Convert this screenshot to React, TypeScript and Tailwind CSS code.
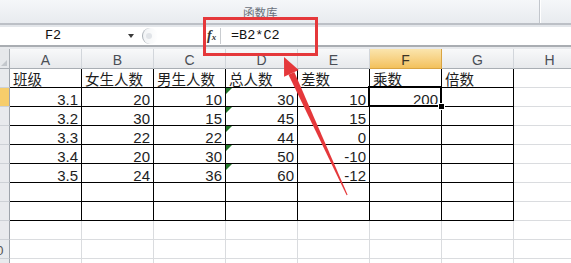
const COLS = ['A', 'B', 'C', 'D', 'E', 'F', 'G', 'H'];

const DATA: string[][] = [
  ['班级', '女生人数', '男生人数', '总人数', '差数', '乘数', '倍数'],
  ['3.1', '20', '10', '30', '10', '200', ''],
  ['3.2', '30', '15', '45', '15', '', ''],
  ['3.3', '22', '22', '44', '0', '', ''],
  ['3.4', '20', '30', '50', '-10', '', ''],
  ['3.5', '24', '36', '60', '-12', '', ''],
  ['', '', '', '', '', '', ''],
  ['', '', '', '', '', '', ''],
  [],
  [],
  [],
];

function Cell({ value, row, col }: { value: string; row: number; col: number }) {
  const boxed = row < 8 && col < 7;
  const isNum = /^-?\d/.test(value);
  const selected = row === 1 && col === 5;
  const flagged = col === 3 && row >= 1 && row <= 5;

  return (
    <div
      className={`relative h-[19px] border-b border-r ${boxed ? 'border-black' : 'border-[#dadcdf]'} ${
        isNum
          ? "pr-[3px] text-right font-['Liberation_Sans',sans-serif] text-[15px] leading-[23px]"
          : "pl-[3px] font-['Noto_Sans_CJK_SC',sans-serif] text-[14.5px] leading-[19px]"
      } whitespace-nowrap text-[#1e1e1e]`}
    >
      {value}
      {flagged && (
        <span className="absolute left-0 top-0 h-0 w-0 border-r-[6px] border-t-[6px] border-r-transparent border-t-[#22772a]" />
      )}
      {selected && (
        <>
          <span className="absolute -bottom-[1px] -left-[2px] -right-[1px] -top-[2px] z-10 border-2 border-black shadow-[inset_0_0_0_1px_#fff]" />
          <span className="absolute -bottom-[4px] -right-[4px] z-10 h-[7px] w-[7px] border border-white bg-black" />
        </>
      )}
    </div>
  );
}

export default function App() {
  return (
    <div className="relative h-[263px] w-[571px] overflow-hidden bg-white font-['Liberation_Sans',sans-serif]">
      {/* ribbon */}
      <div className="flex h-[23px] bg-gradient-to-b from-[#f5f7f9] to-[#e8ebef]">
        <span className="ml-[243px] pt-[6px] font-['Noto_Sans_CJK_SC',sans-serif] text-[11.5px] leading-[13px] text-[#6a717c]">
          函数库
        </span>
        <div className="ml-auto mr-[30px] h-full w-[2px] border-l border-[#c2c6cc] bg-white" />
      </div>
      <div className="h-[2px] bg-[#bcc0c6]" />
      <div className="h-[2px] bg-[#e3e6ea]" />

      {/* formula bar */}
      <div className="flex h-[18px] items-center bg-white">
        <span className="w-[106px] text-center font-['Liberation_Mono',monospace] text-[13.5px] leading-[18px] text-[#111]">
          F2
        </span>
        <span className="ml-[22px] h-0 w-0 border-l-[3px] border-r-[3px] border-t-[4px] border-l-transparent border-r-transparent border-t-[#3a3a3a]" />
        <div className="ml-[8px] flex h-[17px] w-[61px] items-center">
          <div className="flex h-[16px] w-[16px] items-center rounded-full border-l-[1.5px] border-[#aab0b7] bg-gradient-to-r from-[#f1f3f5] to-white pl-[3px]">
            <span className="h-[6px] w-[6px] rounded-full bg-[#e1e4e8]" />
          </div>
        </div>
        <span className="flex w-[16px] items-baseline pl-[4px] font-['Liberation_Serif',serif] italic leading-[18px] text-[#333]">
          <span className="text-[14px] font-bold">f</span>
          <span className="text-[9px] font-bold">x</span>
        </span>
        <span className="ml-[1px] h-[16px] w-px bg-[#c9ccd0]" />
        <span className="ml-[10px] font-['Liberation_Mono',monospace] text-[13.5px] leading-[18px] text-[#111]">
          =B2*C2
        </span>
      </div>
      <div className="h-[2px] bg-[#a9adb2]" />
      <div className="h-[2px] bg-[#e7e9ec]" />

      {/* sheet */}
      <div className="grid grid-cols-[10px_repeat(8,72px)]">
        <div className="relative h-[20px] border-b border-r border-[#a9aeb4] bg-[#e6e8eb]">
          <span className="absolute bottom-[2px] right-[2px] h-0 w-0 border-b-[6px] border-l-[6px] border-b-[#c3c7cc] border-l-transparent" />
        </div>
        {COLS.map((c) => (
          <div
            key={c}
            className={`h-[20px] border-b border-r text-center text-[14px] leading-[22px] ${
              c === 'F'
                ? 'border-[#d9a442] bg-gradient-to-b from-[#fbe5ad] to-[#f3c15b] text-[#3b3325]'
                : 'border-b-[#a9aeb4] border-r-[#d2d6db] bg-gradient-to-b from-[#f8f9fa] to-[#e7e9ec] text-[#4a4e55]'
            }`}
          >
            {c}
          </div>
        ))}

        {DATA.map((row, r) => (
          <div key={r} className="contents">
            <div
              className={`h-[19px] overflow-hidden border-b border-r border-b-[#cdd1d6] border-r-[#9ea4ab] ${
                r === 1 ? 'bg-[#f6cd6b]' : 'bg-[#e8eaed]'
              }`}
            >
              {r === 9 && (
                <span className="-ml-[11px] block text-[13px] leading-[21px] text-[#555]">10</span>
              )}
            </div>
            {COLS.map((_, c) => (
              <Cell key={c} value={row[c] ?? ''} row={r} col={c} />
            ))}
          </div>
        ))}
      </div>

      {/* annotation */}
      <div className="pointer-events-none absolute left-[203px] top-[17px] z-20 h-[39px] w-[115px] border-[3px] border-[#e5383b]" />
      <svg
        className="pointer-events-none absolute left-0 top-0 z-20"
        width="571"
        height="263"
        viewBox="0 0 571 263"
      >
        <polygon points="284,57 298.7,70.1 284.1,76.7" fill="#e5383b" />
        <polygon points="294.3,72.1 288.5,74.7 346.6,195.3 347.6,194.8" fill="#e5383b" />
      </svg>
    </div>
  );
}
